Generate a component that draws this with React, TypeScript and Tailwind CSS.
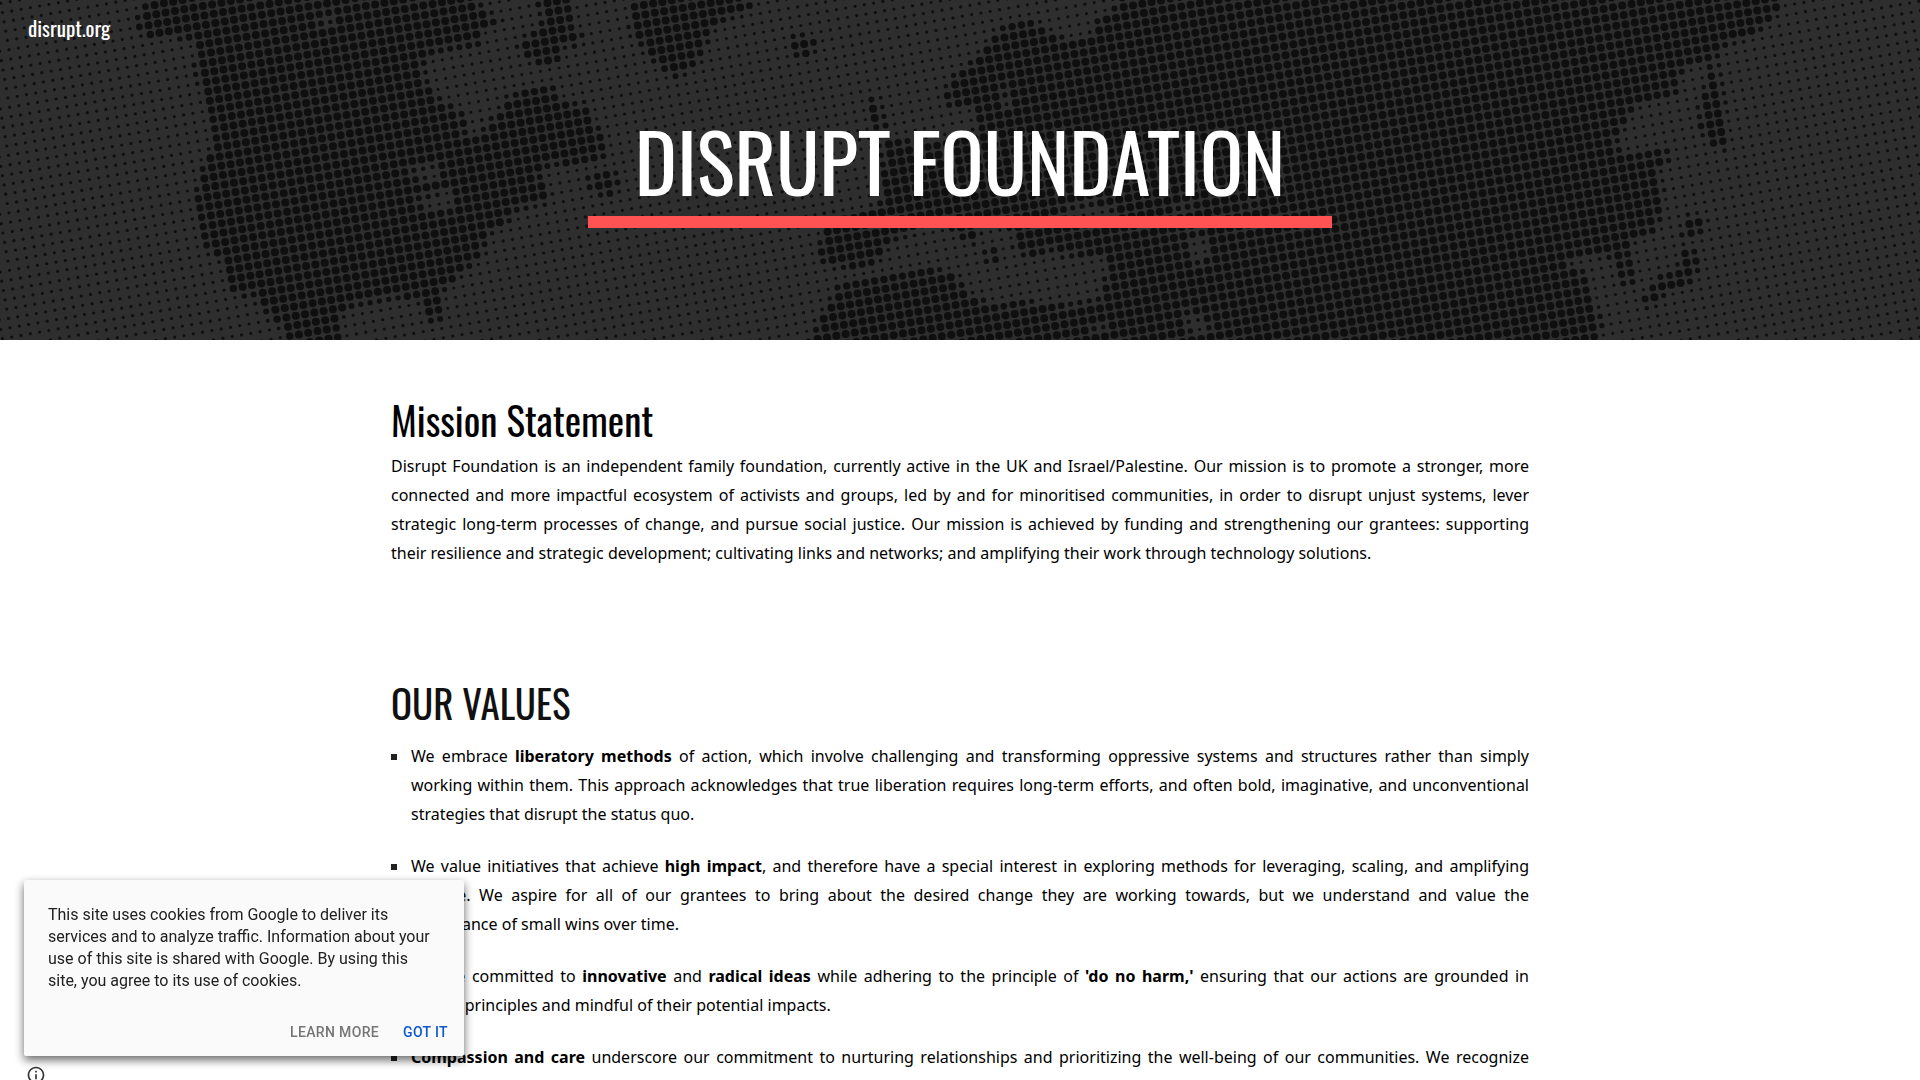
import type { ReactNode } from "react";
import { MdInfoOutline } from "react-icons/md";

type Point = [number, number];

const parse = (s: string): Point[] =>
  s.split(" ").map((p) => p.split(",").map(Number) as Point);

// Outlines of the land masses on the banner map
const land = [
  // Americas
  "151,-5 145,5 140,17 138,28 147,38 183,35 196,43 199,55 196,73 204,90 209,110 213,133 215,145 207,160 200,180 197,200 200,220 203,245 223,258 228,283 235,293 253,292 261,303 271,317 286,330 288,350 341,350 337,318 351,303 392,297 420,296 426,310 429,323 443,322 440,293 451,281 469,267 482,250 488,233 506,222 518,207 549,200 545,183 535,178 547,163 571,163 604,157 602,135 590,123 588,105 557,103 555,87 527,90 504,100 502,113 484,125 484,140 465,138 463,113 443,103 427,88 420,67 429,53 457,47 482,44 480,28 504,22 478,8 478,-5",
  "535,-5 571,-5 571,28 584,35 580,42 558,45 562,60 541,66 527,55 515,45 527,38 540,30 545,20",
  "587,178 612,172 620,182 612,195 590,190",
  // Greenland and Iceland
  "632,-5 757,-5 750,8 722,20 706,35 702,55 686,70 675,78 660,65 647,52 632,30",
  "790,36 814,38 812,55 795,57",
  // Europe, Africa and Asia
  "1118,-5 1117,5 1112,15 1095,20 1094,35 1075,42 1060,38 1045,32 1032,22 1005,27 992,38 985,50 975,62 960,73 950,82 947,90 946,108 976,104 976,120 985,130 1000,126 960,138 930,144 890,139 882,118 876,97 868,96 870,115 878,128 884,150 882,180 885,190 880,206 860,214 828,216 820,250 823,262 845,267 872,265 882,252 887,240 907,235 917,226 1015,226 1016,248 1028,257 1045,252 1060,240 1058,257 1073,255 1097,253 1108,257 1110,267 1106,280 1105,293 1097,303 1073,305 1053,306 1013,302 1000,307 973,300 963,287 953,275 937,270 903,273 863,280 837,285 835,295 828,308 820,320 808,350 1592,350 1598,330 1600,317 1590,300 1586,283 1586,273 1562,267 1574,257 1590,252 1607,257 1623,257 1629,247 1633,237 1655,232 1660,213 1662,197 1658,180 1656,167 1668,160 1670,150 1649,152 1627,155 1613,147 1617,133 1625,122 1631,108 1647,100 1678,95 1676,80 1684,65 1708,60 1713,58 1725,43 1753,33 1768,20 1780,8 1780,-5",
  "958,226 978,226 976,242 960,240",
  "982,250 994,248 1002,260 990,264",
  // Japan and the south-east islands
  "1707,63 1715,63 1723,110 1725,133 1727,150 1714,147 1700,125 1702,100 1708,83",
  "1615,253 1629,253 1636,283 1623,287",
  "1688,215 1705,219 1700,235 1680,237",
  "1684,247 1697,250 1697,267 1690,283 1668,290 1648,310 1643,300 1660,277 1680,273",
].map(parse);

// Lakes and inland seas
const water = [
  "404,172 433,162 443,168 441,180 429,182 408,177",
  "412,200 449,187 457,193 453,212 429,214 420,207",
  "314,17 339,10 339,20 322,28",
  "1001,82 1009,82 1011,110 1002,112",
  "1062,208 1090,203 1118,205 1110,216 1070,222 1060,215",
  "1168,209 1200,205 1202,213 1170,217",
  "1242,204 1258,202 1257,209 1243,212",
  "1190,235 1205,232 1212,255 1205,265 1190,262 1187,245",
  "1092,325 1108,322 1107,335 1095,337",
  "1182,312 1192,310 1215,325 1205,335 1190,335",
].map(parse);

const inside = (x: number, y: number, poly: Point[]) => {
  let hit = false;
  for (let i = 0, j = poly.length - 1; i < poly.length; j = i++) {
    const [xi, yi] = poly[i];
    const [xj, yj] = poly[j];
    if (yi > y !== yj > y && x < ((xj - xi) * (y - yi)) / (yj - yi) + xi) {
      hit = !hit;
    }
  }
  return hit;
};

const isLand = (x: number, y: number) =>
  land.some((p) => inside(x, y, p)) && !water.some((p) => inside(x, y, p));

// Tilted halftone grid, dots grow with the share of land in their cell
function buildDots() {
  const stepX = 9.303;
  const stepY = 1.6375;
  let d = "";
  for (let m = -130; m < 100; m++) {
    for (let n = -30; n < 60; n++) {
      const x = 1123.7 + m * stepX + n * stepY;
      const y = 7 - m * stepY + n * stepX;
      if (x < -5 || x > 1925 || y < -5 || y > 345) continue;
      let share = 0;
      for (const dx of [-4, 0, 4]) {
        for (const dy of [-4, 0, 4]) {
          if (isLand(x + dx, y + dy)) share += 1 / 9;
        }
      }
      const r = 1.6 + 2.4 * Math.min(1, share * 1.3);
      d += `M${(x - r).toFixed(1)} ${y.toFixed(1)}a${r.toFixed(1)} ${r.toFixed(1)} 0 1 0 ${(2 * r).toFixed(1)} 0a${r.toFixed(1)} ${r.toFixed(1)} 0 1 0 ${(-2 * r).toFixed(1)} 0`;
    }
  }
  return d;
}

const dots = buildDots();

const headingFont = "font-['Oswald','Liberation_Sans_Narrow',sans-serif]";

const values: { id: string; text: ReactNode; className?: string }[] = [
  {
    id: "methods",
    text: (
      <>
        We embrace <b>liberatory methods</b> of action, which involve
        challenging and transforming oppressive systems and structures rather
        than simply working within them. This approach acknowledges that true
        liberation requires long-term efforts, and often bold, imaginative, and
        unconventional strategies that disrupt the status quo.
      </>
    ),
  },
  {
    id: "impact",
    text: (
      <>
        We value initiatives that achieve <b>high impact</b>, and therefore have
        a special interest in exploring methods for leveraging, scaling, and
        amplifying change. We aspire for all of our grantees to bring about the
        desired change they are working towards, but we understand and value the
        importance&nbsp;of&nbsp;small wins over time.
      </>
    ),
  },
  {
    id: "ideas",
    text: (
      <>
        We are committed to <b>innovative</b> and <b>radical ideas</b> while
        adhering to the principle of <b>'do no harm,'</b> ensuring that our
        actions are grounded in ethical&nbsp;principles and mindful of their
        potential impacts.
      </>
    ),
  },
  {
    id: "care",
    className: "[text-align-last:justify]",
    text: (
      <>
        <b>Compassion and care</b> underscore our commitment to nurturing
        relationships and prioritizing the well-being of our communities. We
        recognize
      </>
    ),
  },
];

function Banner() {
  return (
    <header className="relative overflow-hidden bg-[#2e2e2e] text-white">
      <svg
        className="absolute inset-0 h-full w-full"
        viewBox="0 0 1920 340"
        preserveAspectRatio="xMidYMid slice"
        aria-hidden="true"
      >
        <path d={dots} fill="#0f0f0f" />
      </svg>
      <div className="relative flex flex-col px-7 pt-3 pb-28">
        <a
          href="#"
          className={`self-start text-[21px] leading-8 ${headingFont}`}
        >
          disrupt.org
        </a>
        <div className="mx-auto flex w-full max-w-[744px] flex-col items-center pt-[62px]">
          <h1
            className={`pb-0.5 text-[80px] leading-[108px] whitespace-nowrap ${headingFont}`}
          >
            DISRUPT FOUNDATION
          </h1>
          <div className="h-3 w-full bg-[#ff5252]" />
        </div>
      </div>
    </header>
  );
}

function CookieNotice() {
  return (
    <div
      role="dialog"
      aria-label="Cookie notice"
      className="fixed bottom-6 left-6 w-[440px] rounded-xs bg-[#fafafa] pt-6 pr-2 pb-1.5 pl-6 font-['Roboto',sans-serif] shadow-[0_4px_10px_rgba(0,0,0,0.6)]"
    >
      <p className="pr-6 text-base leading-[22px] text-[#212121]">
        This site uses cookies from Google to deliver its services and to
        analyze traffic. Information about your use of this site is shared with
        Google. By using this site, you agree to its use of cookies.
      </p>
      <div className="mt-[22px] flex justify-end gap-2">
        <a
          href="#"
          className="px-2 text-sm leading-9 font-medium tracking-wide text-[#757575]"
        >
          LEARN MORE
        </a>
        <button
          type="button"
          className="px-2 text-sm leading-9 font-medium tracking-wide text-[#0b57d0]"
        >
          GOT IT
        </button>
      </div>
    </div>
  );
}

export default function App() {
  return (
    <div className="min-h-screen bg-white font-['Noto_Sans','Open_Sans',sans-serif] text-base leading-[29px] text-black">
      <Banner />
      <main className="mx-auto max-w-[1138px] pt-[47px]">
        <section>
          <h2 className={`text-[39px] leading-[64px] ${headingFont}`}>
            Mission Statement
          </h2>
          <p className="mt-px text-justify">
            Disrupt Foundation is an independent family foundation, currently
            active in the UK and Israel/Palestine. Our mission is to promote a
            stronger, more connected and more impactful ecosystem of activists
            and groups, led by and for minoritised communities, in order to
            disrupt unjust systems, lever strategic long-term processes of
            change, and pursue social justice. Our mission is achieved by
            funding and strengthening our grantees: supporting their resilience
            and strategic development; cultivating links and networks; and
            amplifying their work through technology solutions.
          </p>
        </section>

        <section className="pt-[102px]">
          <h2
            className={`text-[39px] leading-[64px] text-[#111111] ${headingFont}`}
          >
            OUR VALUES
          </h2>
          <ul className="mt-2 space-y-[23px]">
            {values.map((value) => (
              <li key={value.id} className="flex gap-3.5">
                <span className="mt-3 size-1.5 shrink-0 bg-[#212121]" />
                <p className={`grow text-justify ${value.className ?? ""}`}>
                  {value.text}
                </p>
              </li>
            ))}
          </ul>
        </section>
      </main>
      <CookieNotice />
      <button
        type="button"
        aria-label="Site information"
        className="fixed bottom-[-5px] left-[26px] text-[#333333]"
      >
        <MdInfoOutline size={20} />
      </button>
    </div>
  );
}
